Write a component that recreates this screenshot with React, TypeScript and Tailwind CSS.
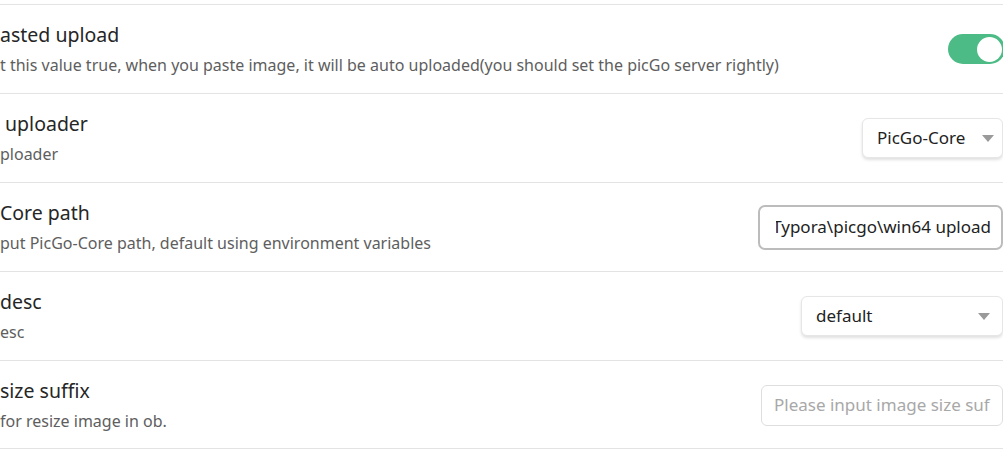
const font = { fontFamily: '"Noto Sans", "Open Sans", sans-serif' };

const Arrow = () => (
  <svg width="12" height="7" viewBox="0 0 12 7" className="shrink-0">
    <path d="M0 0 L12 0 L6 7 Z" fill="#9a9a9a" />
  </svg>
);

const Row = ({
  title,
  desc,
  children,
}: {
  title: string;
  desc: string;
  children: React.ReactNode;
}) => (
  <div className="flex items-center justify-between border-t border-[#e3e3e3] h-[89px]">
    <div className="flex flex-col whitespace-nowrap">
      <div className="text-[19.5px] leading-7 text-[#262626] whitespace-pre">{title}</div>
      <div className="mt-[4px] text-[16px] leading-6 text-[#5e5e5e] whitespace-pre">{desc}</div>
    </div>
    <div className="flex items-center">{children}</div>
  </div>
);

export default function App() {
  return (
    <div className="w-[1003px] h-[471px] overflow-hidden bg-white" style={font}>
      <div className="w-[1005px] pt-[4px]">
        <Row
          title="asted upload"
          desc="t this value true, when you paste image, it will be auto uploaded(you should set the picGo server rightly)"
        >
          <div className="w-[57px] h-[30px] rounded-full bg-[#4cbb85] flex items-center justify-end pr-[3px]">
            <div className="w-[25px] h-[25px] rounded-full bg-white" />
          </div>
        </Row>
        <Row title=" uploader" desc="ploader">
          <div className="w-[141px] h-[40px] rounded-[6px] bg-white border border-[#e6e6e6] shadow-[0_2px_3px_rgba(0,0,0,0.12)] flex items-center justify-between pl-[14px] pr-[8px] mr-[2px]">
            <span className="text-[17px] text-[#222222]">PicGo-Core</span>
            <Arrow />
          </div>
        </Row>
        <Row title="Core path" desc="put PicGo-Core path, default using environment variables">
          <div className="w-[245px] h-[45px] rounded-[7px] border-2 border-[#bcbcbc] bg-white flex items-center pl-[16px] pr-[10px] mr-[2px]">
            <div className="flex-1 flex justify-end overflow-hidden">
              <span className="text-[17px] text-[#222222] whitespace-nowrap">Typora\picgo\win64 upload</span>
            </div>
          </div>
        </Row>
        <Row title="desc" desc="esc">
          <div className="w-[202px] h-[40px] rounded-[6px] bg-white border border-[#e6e6e6] shadow-[0_2px_3px_rgba(0,0,0,0.12)] flex items-center justify-between pl-[14px] pr-[12px] mr-[2px]">
            <span className="text-[17px] text-[#222222]">default</span>
            <Arrow />
          </div>
        </Row>
        <Row title="size suffix" desc="for resize image in ob.">
          <div className="w-[242px] h-[41px] rounded-[6px] border border-[#dedede] bg-white flex items-center overflow-hidden pl-[12px] mr-[2px]">
            <span className="text-[17px] text-[#a8a8a8] whitespace-nowrap">Please input image size suf</span>
          </div>
        </Row>
        <div className="border-t border-[#e3e3e3] -mt-px" />
      </div>
    </div>
  );
}
